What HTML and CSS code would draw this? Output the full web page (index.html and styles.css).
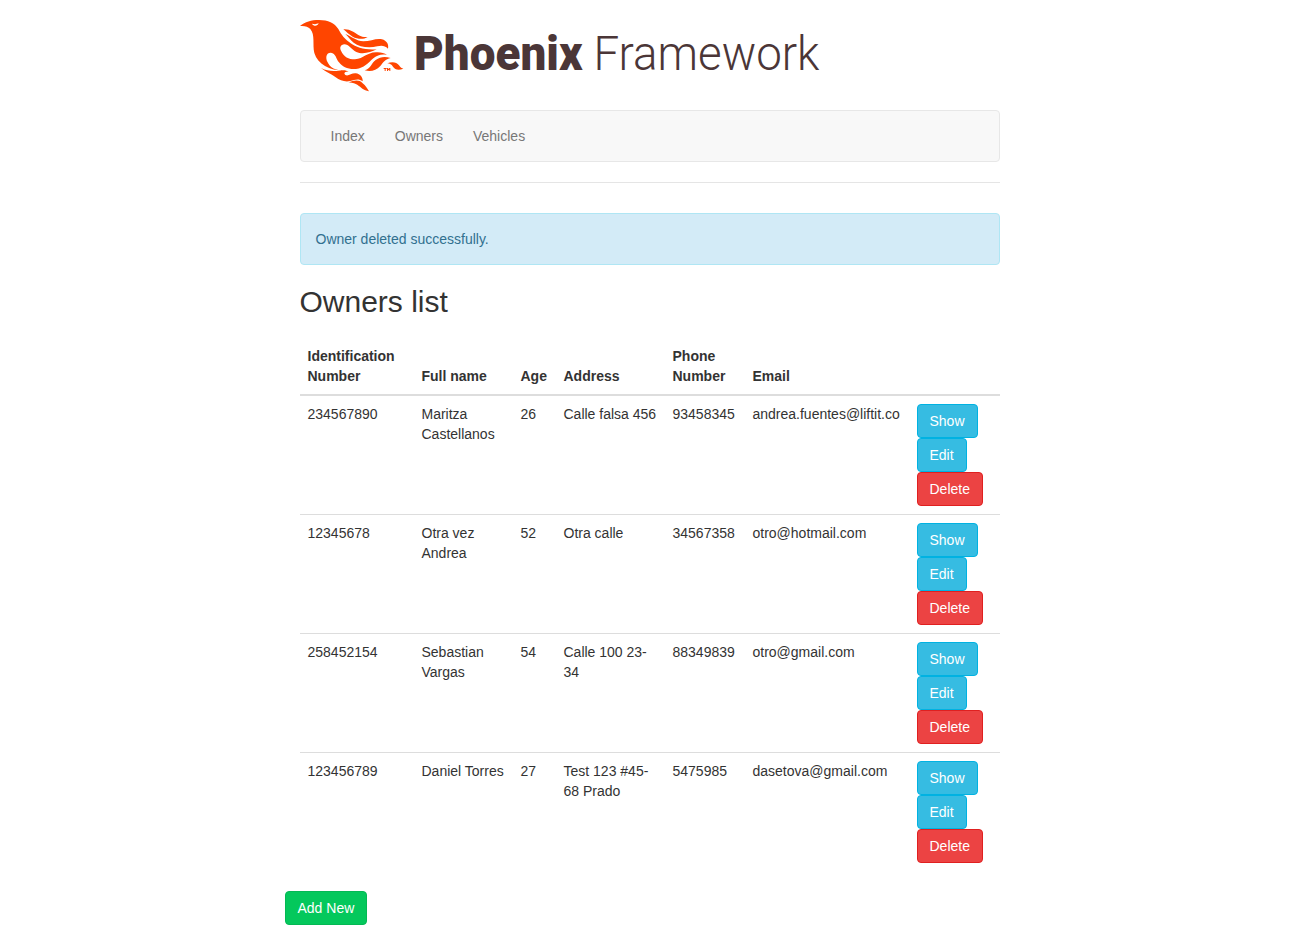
FILE: index.html
```html
<!DOCTYPE html>
<html lang="en">
<head>
<meta charset="utf-8">
<title>Owners list</title>
<link rel="stylesheet" href="styles.css">
</head>
<body>
<div class="container">
  <header class="header">
    <svg class="logo" viewBox="0 0 520 72" role="img" aria-label="Phoenix Framework">
      <g class="bird" transform="translate(-5 -8) scale(.33333)">
        <path fill-rule="evenodd" d="M15 42C31 29 48 24 72 24C99 24 119 33 130 51C139 69 150 82 167 94C184 106 211 115 245 112C227 122 202 128 184 120C170 113 161 97 148 97C137 98 133 107 138 116C147 135 160 142 180 142C207 140 214 122 243 121C256 120 268 123 276 129C259 125 248 130 236 138C219 153 207 168 183 171C160 173 142 165 132 151C124 142 122 123 108 122C94 121 91 136 97 149C105 167 122 175 146 176C104 176 68 156 58 123C52 97 61 69 46 51C39 43 29 41 15 42ZM51 35C56 44 68 43 71 34C64 37 58 37 51 35Z"/>
        <path d="M145 52C164 50 177 61 190 69C201 75 209 76 218 75C204 84 187 81 173 74C161 68 154 58 145 52Z"/>
        <path d="M151 66C171 74 184 87 205 88C226 88 244 78 261 82C275 86 282 97 279 110C270 101 260 100 247 103C221 109 193 105 176 92C165 84 160 74 151 66Z"/>
        <path d="M209 175C229 169 229 153 242 144C256 134 270 133 287 138C271 141 265 151 256 162C243 177 226 179 209 175Z"/>
        <path d="M277 154C291 148 305 150 312 160C317 167 320 169 325 170C309 176 300 172 294 164C289 157 285 155 277 154Z"/>
        <path d="M78 168C97 178 114 178 133 176C144 174 155 174 161 180C150 178 145 184 151 189C160 194 169 183 182 184C196 186 204 196 203 208C191 198 179 203 166 207C150 211 135 205 122 196C104 183 92 180 78 168Z"/>
        <path d="M160 212C176 205 193 202 203 214C212 220 216 229 222 238C205 235 198 226 188 219C180 214 171 211 160 212Z"/>
        <path d="M266 168H275V171H272V177H269V171H266ZM276 168H279L281 171L283 168H286V177H283V173L281 175L279 173V177H276Z"/>
      </g>
      <text class="brand-bold" x="114" y="50" textLength="168.5" lengthAdjust="spacingAndGlyphs">Phoenix</text>
      <text class="brand-light" x="293.5" y="50" textLength="226" lengthAdjust="spacingAndGlyphs">Framework</text>
    </svg>
    <nav class="navbar">
      <a href="#">Index</a><a href="#">Owners</a><a href="#">Vehicles</a>
    </nav>
  </header>
  <p class="alert">Owner deleted successfully.</p>
  <main>
    <h2>Owners list</h2>
    <table class="table">
      <colgroup><col class="c-id"><col class="c-name"><col class="c-age"><col class="c-address"><col class="c-phone"><col class="c-email"><col></colgroup>
      <thead>
        <tr><th>Identification Number</th><th>Full name</th><th>Age</th><th>Address</th><th>Phone Number</th><th>Email</th><th></th></tr>
      </thead>
      <tbody>
        <tr><td>234567890</td><td>Maritza Castellanos</td><td>26</td><td>Calle falsa 456</td><td>93458345</td><td>andrea.fuentes@liftit.co</td>
          <td><div class="actions"><a class="btn info">Show</a><a class="btn info">Edit</a><a class="btn danger">Delete</a></div></td></tr>
        <tr><td>12345678</td><td>Otra vez Andrea</td><td>52</td><td>Otra calle</td><td>34567358</td><td>otro@hotmail.com</td>
          <td><div class="actions"><a class="btn info">Show</a><a class="btn info">Edit</a><a class="btn danger">Delete</a></div></td></tr>
        <tr><td>258452154</td><td>Sebastian Vargas</td><td>54</td><td>Calle 100 23-34</td><td>88349839</td><td>otro@gmail.com</td>
          <td><div class="actions"><a class="btn info">Show</a><a class="btn info">Edit</a><a class="btn danger">Delete</a></div></td></tr>
        <tr><td>123456789</td><td>Daniel Torres</td><td>27</td><td>Test 123 #45-68 Prado</td><td>5475985</td><td>dasetova@gmail.com</td>
          <td><div class="actions"><a class="btn info">Show</a><a class="btn info">Edit</a><a class="btn danger">Delete</a></div></td></tr>
      </tbody>
    </table>
  </main>
  <footer class="footer"><a class="btn success">Add New</a></footer>
</div>
</body>
</html>
```
FILE: styles.css
```css
* { box-sizing: border-box; }
body {
  margin: 0;
  padding: 20px 0;
  font: 14px/20px "Liberation Sans", Arial, sans-serif;
  color: #333;
  background: #fff;
}
.container { width: 730px; margin: 0 auto; padding: 0 15px; }
.header { border-bottom: 1px solid #e5e5e5; padding-bottom: 20px; margin-bottom: 30px; }
.logo { display: block; width: 520px; height: 72px; margin-bottom: 18px; overflow: visible; }
.bird { fill: #ff4500; }
.brand-bold, .brand-light { fill: #4b3637; font-family: Roboto, sans-serif; font-size: 48px; }
.brand-bold { font-weight: 900; }
.brand-light { font-weight: 300; }
.navbar {
  display: flex;
  height: 52px;
  padding: 0 15px;
  background: #f8f8f8;
  border: 1px solid #e7e7e7;
  border-radius: 4px;
}
.navbar a { padding: 15px; color: #777; text-decoration: none; }
.alert {
  margin: 0 0 20px;
  padding: 15px;
  color: #31708f;
  background: #d3ebf7;
  border: 1px solid #afe6f4;
  border-radius: 4px;
}
h2 { margin: 0 0 20px; font-size: 30px; line-height: 33px; font-weight: normal; }
.table { width: 100%; table-layout: fixed; border-collapse: collapse; margin-bottom: 20px; }
.table th, .table td { padding: 8px; text-align: left; vertical-align: top; }
.table th { vertical-align: bottom; border-bottom: 2px solid #ddd; }
.table td { border-top: 1px solid #ddd; }
.c-id { width: 114px; }
.c-name { width: 99px; }
.c-age { width: 43px; }
.c-address { width: 109px; }
.c-phone { width: 80px; }
.c-email { width: 164px; }
.actions { display: flex; flex-direction: column; align-items: flex-start; }
.btn {
  display: inline-block;
  padding: 6px 12px;
  border: 1px solid;
  border-radius: 4px;
  color: #fff;
}
.info { background: #36bce2; border-color: #00b2e2; }
.danger { background: #ec4343; border-color: #e02020; }
.success { background: #04c85c; border-color: #04b854; }
.footer { display: flex; margin-left: -15px; }
```
